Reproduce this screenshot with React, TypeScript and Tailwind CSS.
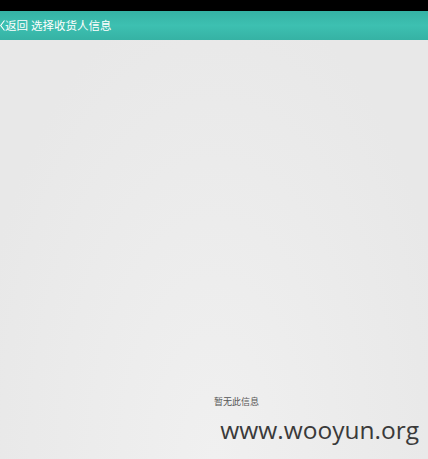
export default function App() {
  return (
    <div
      className="w-[428px] h-[459px] flex flex-col overflow-hidden"
      style={{ fontFamily: '"Noto Sans CJK SC", "Noto Sans", sans-serif' }}
    >
      {/* status bar */}
      <div className="h-[11px] bg-black" />

      {/* title bar */}
      <div className="h-[29px] bg-gradient-to-b from-[#35b3a5] via-[#3dc0b1] to-[#36b2a4] flex items-center text-white text-[11.5px] leading-none">
        <svg width="5" height="11" viewBox="0 0 5 11" className="shrink-0">
          <path d="M4.5 0.5 L0.7 5.5 L4.5 10.5" fill="none" stroke="white" strokeWidth="1.1" />
        </svg>
        <span>返回</span>
        <span className="ml-[3px]">选择收货人信息</span>
      </div>

      {/* content */}
      <div className="flex-1 flex flex-col items-center bg-[radial-gradient(ellipse_at_50%_100%,#f0f0f0_0%,#ececec_40%,#e8e8e8_80%)]">
        <div className="flex-1" />
        <div className="text-[9px] text-[#555] leading-none mb-[12px] ml-[45px]">暂无此信息</div>
        <div
          className="self-end mr-[9px] mb-[17px] text-[24.5px] leading-none text-[#3a3a3a]"
          style={{ fontFamily: '"Open Sans", "Noto Sans", sans-serif' }}
        >
          www.wooyun.org
        </div>
      </div>
    </div>
  );
}
